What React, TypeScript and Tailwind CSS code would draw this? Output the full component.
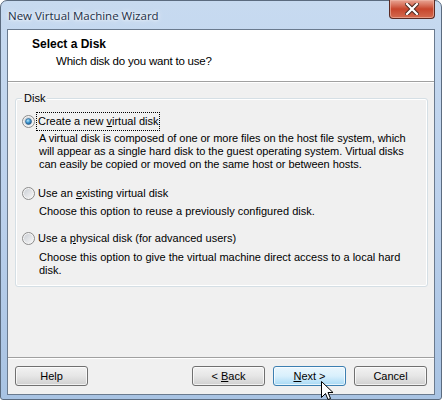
import React from 'react';

const ui = { fontFamily: '"Liberation Sans", Arial, sans-serif' };

function Radio({ checked }: { checked?: boolean }) {
    return (
        <svg width="13" height="13" viewBox="0 0 13 13" className="shrink-0">
            <defs>
                <linearGradient id={checked ? 'rgOn' : 'rgOff'} x1="0" y1="0" x2="1" y2="1">
                    <stop offset="0" stopColor="#cbcfd5" />
                    <stop offset="1" stopColor="#f6f6f6" />
                </linearGradient>
                <radialGradient id="dot" cx="0.4" cy="0.35" r="0.7">
                    <stop offset="0" stopColor="#b9e9fc" />
                    <stop offset="0.5" stopColor="#3c95cf" />
                    <stop offset="1" stopColor="#1b4f80" />
                </radialGradient>
            </defs>
            <circle cx="6.5" cy="6.5" r="6" fill="#f4f4f4" stroke="#8a8a8a" strokeWidth="1" />
            <circle cx="6.5" cy="6.5" r="4.5" fill={`url(#${checked ? 'rgOn' : 'rgOff'})`} />
            {checked && <circle cx="6.5" cy="6.5" r="3" fill="url(#dot)" stroke="#2e5f8a" strokeWidth="0.6" />}
        </svg>
    );
}

function Btn({ children, hot }: { children: React.ReactNode; hot?: boolean }) {
    return (
        <div
            className={
                hot
                    ? 'w-[73px] h-[20px] rounded-[3px] border border-[#3c7fb1] bg-gradient-to-b from-[#eaf6fd] via-[#d9f0fc] to-[#a7d9f5] flex items-center justify-center text-[11px] text-black shadow-[inset_0_0_0_1px_#ffffffb0]'
                    : 'w-[73px] h-[20px] rounded-[3px] border border-[#707070] bg-gradient-to-b from-[#f2f2f2] via-[#e6e6e6] to-[#cfcfcf] flex items-center justify-center text-[11px] text-black shadow-[inset_0_0_0_1px_#ffffffb0]'
            }
        >
            {children}
        </div>
    );
}

export default function App() {
    return (
        <div className="w-[442px] h-[401px] relative overflow-hidden bg-white" style={ui}>
            <div className="h-[400px] rounded-t-[7px] rounded-b-[3px] border border-[#5b6b7f] bg-gradient-to-b from-[#c7daf0] via-[#bcd1ec] to-[#a8c3e3] flex flex-col">
                <div className="h-[28px] flex items-start justify-between pl-[7px] pr-[6px]">
                    <span
                        className="pt-[6px] text-[11.5px] text-[#1c2f47]"
                        style={{ fontFamily: '"Open Sans", "Noto Sans", sans-serif', textShadow: '0 0 6px #ffffff, 0 0 3px #ffffff' }}
                    >
                        New Virtual Machine Wizard
                    </span>
                    <div className="w-[46px] h-[19px] -mt-px rounded-b-[4px] border border-[#5a2a23] border-t-0 bg-gradient-to-b from-[#e8a595] via-[#c7452c] to-[#d36a4f] flex items-center justify-center shadow-[inset_0_0_0_1px_#f0b8a8a0]">
                        <svg width="14" height="12" viewBox="0 0 14 12">
                            <path d="M2 1 L12 11 M12 1 L2 11" stroke="#4d2a22" strokeWidth="4.2" strokeLinecap="square" />
                            <path d="M2 1 L12 11 M12 1 L2 11" stroke="#ffffff" strokeWidth="2.2" strokeLinecap="square" />
                        </svg>
                    </div>
                </div>
                <div className="mx-[6px] h-[366px] border border-[#6a7a8e] bg-[#f0f0f0] flex flex-col">
                    <div className="h-[52px] bg-white border-b border-[#a0a0a0] pl-[24px] pt-[6px]">
                        <div className="text-[12px] font-bold leading-[16px] text-black">Select a Disk</div>
                        <div className="text-[11.5px] leading-[16px] pl-[24px] pt-[1px] text-black tracking-[-0.2px]">Which disk do you want to use?</div>
                    </div>
                    <div className="border-t border-white" />
                    <div className="ml-[7px] mr-[6px] mt-[15px] h-[189px] rounded-[3px] border border-[#d5dfe5] shadow-[inset_0_0_0_1px_#ffffff] relative text-[11px] leading-[13px] text-black">
                        <span className="absolute left-[6px] -top-[7px] px-[2px] bg-[#f0f0f0]">Disk</span>
                        <div className="pl-[6px] pt-[13px] flex items-center gap-[1px]">
                            <Radio checked />
                            <span className="border border-dotted border-black px-[1px] py-[2px]">
                                Create a new <u>v</u>irtual disk
                            </span>
                        </div>
                        <div className="pl-[23px] pt-[1px] leading-[13px] tracking-[-0.05px]">
                            A virtual disk is composed of one or more files on the host file system, which<br />
                            will appear as a single hard disk to the guest operating system. Virtual disks<br />
                            can easily be copied or moved on the same host or between hosts.
                        </div>
                        <div className="pl-[6px] pt-[16px] flex items-center gap-[2px]">
                            <Radio />
                            <span className="px-[1px]">Use an <u>e</u>xisting virtual disk</span>
                        </div>
                        <div className="pl-[23px] pt-[5px]">Choose this option to reuse a previously configured disk.</div>
                        <div className="pl-[6px] pt-[14px] flex items-center gap-[2px]">
                            <Radio />
                            <span className="px-[1px]">Use a <u>p</u>hysical disk (for advanced users)</span>
                        </div>
                        <div className="pl-[23px] pt-[6px]">
                            Choose this option to give the virtual machine direct access to a local hard<br />
                            disk.
                        </div>
                    </div>
                    <div className="mt-[70px] border-t border-[#a0a0a0]" />
                    <div className="border-t border-white" />
                    <div className="mt-[7px] ml-[7px] mr-[7px] flex items-center">
                        <Btn>Help</Btn>
                        <div className="flex-1" />
                        <div className="flex gap-[8px]">
                            <Btn>&lt;&nbsp;<u>B</u>ack</Btn>
                            <Btn hot><u>N</u>ext&nbsp;&gt;</Btn>
                            <Btn>Cancel</Btn>
                        </div>
                    </div>
                </div>
            </div>
            <svg className="absolute left-[321px] top-[381px]" width="13" height="20" viewBox="0 0 13 20">
                <path d="M0.5 0.5 L0.5 16.5 L4.5 12.5 L7 18.5 L9.5 17.5 L7 11.5 L12 11.5 Z" fill="#ffffff" stroke="#000000" strokeWidth="1" strokeLinejoin="miter" />
            </svg>
        </div>
    );
}
